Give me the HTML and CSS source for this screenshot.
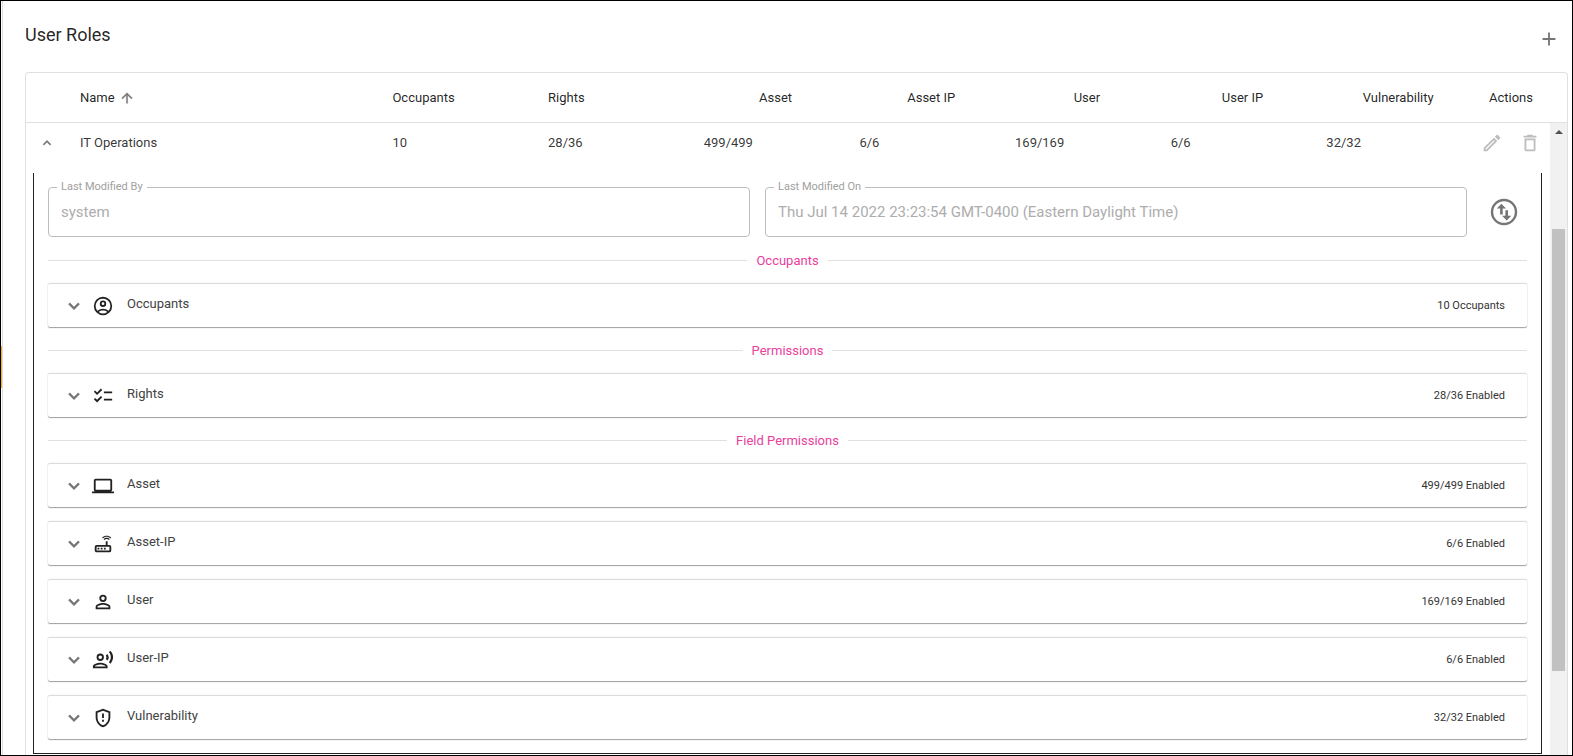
FILE: index.html
```html
<!DOCTYPE html>
<html lang="en">
<head>
<meta charset="utf-8">
<title>User Roles</title>
<link rel="stylesheet" href="styles.css">
</head>
<body>
<svg class="sprite" aria-hidden="true">
  <symbol id="chevron" viewBox="0 0 24 24"><path d="M7.41 8.59 12 13.17l4.59-4.58L18 10l-6 6-6-6z" stroke="currentColor" stroke-width=".5"/></symbol>
</svg>
<div class="drawer-edge"><span class="drawer-handle"></span></div>
<main class="page">
  <header class="page-header">
    <h1 class="page-title">User Roles</h1>
    <button class="icon-button add" aria-label="Add role"><svg class="icon" viewBox="0 0 24 24"><path d="M19 13h-6v6h-2v-6H5v-2h6V5h2v6h6z"/></svg></button>
  </header>
  <section class="grid-panel">
    <table class="roles">
      <colgroup><col class="col-toggle"><col class="col-name"><col><col><col><col><col><col><col><col class="col-actions"></colgroup>
      <thead>
        <tr>
          <th></th>
          <th><span class="sorted">Name <svg class="sort-icon" viewBox="0 0 24 24"><path d="m4 12 1.41 1.41L11 7.83V20h2V7.83l5.58 5.59L20 12l-8-8z" stroke="currentColor" stroke-width=".5"/></svg></span></th>
          <th>Occupants</th><th>Rights</th>
          <th class="centered">Asset</th><th class="centered">Asset IP</th><th class="centered">User</th><th class="centered">User IP</th><th class="centered">Vulnerability</th>
          <th class="actions-head">Actions</th>
        </tr>
      </thead>
      <tbody>
        <tr class="role-row">
          <td class="toggle-cell"><button class="icon-button" aria-label="Collapse"><svg class="icon-small flipped" viewBox="0 0 24 24"><use href="#chevron"/></svg></button></td>
          <td>IT Operations</td><td>10</td><td>28/36</td><td>499/499</td><td>6/6</td><td>169/169</td><td>6/6</td><td>32/32</td>
          <td class="actions-cell"><div class="actions">
            <button class="icon-button muted" aria-label="Edit"><svg class="icon" viewBox="0 0 24 24"><path d="m14.06 9.02.92.92L5.92 19H5v-.92zM17.66 3c-.25 0-.51.1-.7.29l-1.83 1.83 3.75 3.75 1.83-1.83a1 1 0 0 0 0-1.41l-2.34-2.34c-.2-.2-.45-.29-.71-.29m-3.6 3.19L3 17.25V21h3.75L17.81 9.94z"/></svg></button>
            <button class="icon-button muted" aria-label="Delete"><svg class="icon" viewBox="0 0 24 24"><path d="M6 19c0 1.100.9 2 2 2h8c1.100 0 2-.9 2-2V7H6zM8 9h8v10H8zm7.500-5-1-1h-5l-1 1H5v2h14V4z"/></svg></button>
          </div></td>
        </tr>
        <tr>
          <td class="detail-cell" colspan="10">
            <div class="detail">
              <div class="fields">
                <fieldset class="field"><legend><label for="by">Last Modified By</label></legend><input id="by" value="system" disabled></fieldset>
                <fieldset class="field"><legend><label for="on">Last Modified On</label></legend><input id="on" value="Thu Jul 14 2022 23:23:54 GMT-0400 (Eastern Daylight Time)" disabled></fieldset>
                <button class="icon-button swap" aria-label="Toggle all"><svg class="icon-large" viewBox="0 0 32 32"><circle cx="16" cy="16" r="12" fill="none" stroke="currentColor" stroke-width="2.4"/><path d="m13.400 7.800 4.600 4.600h-3.300v6h-2.600v-6H8.800zM18.700 24.400l-4.600-4.600h3.300v-5.600H20v5.600h3.300z"/></svg></button>
              </div>
              <h2 class="divider">Occupants</h2>
              <button class="card"><svg class="chevron" viewBox="0 0 24 24"><use href="#chevron"/></svg><svg class="card-icon" viewBox="0 0 24 24"><path fill-rule="evenodd" d="M12 2a10 10 0 1 0 0 20 10 10 0 0 0 0-20M7.350 18.500C8.660 17.560 10.260 17 12 17s3.340.56 4.650 1.500a8 8 0 0 1-9.300 0m10.790-1.380a9.950 9.950 0 0 0-12.280 0A8 8 0 1 1 20 12c0 1.950-.7 3.730-1.860 5.120M12 6a3.500 3.500 0 1 0 0 7 3.500 3.500 0 0 0 0-7m0 5a1.500 1.500 0 1 1 0-3 1.500 1.500 0 0 1 0 3"/></svg><span class="card-name">Occupants</span><span class="card-count">10 Occupants</span></button>
              <h2 class="divider">Permissions</h2>
              <button class="card"><svg class="chevron" viewBox="0 0 24 24"><use href="#chevron"/></svg><svg class="card-icon" viewBox="0 0 24 24"><path d="M22 7h-9v2h9zm0 8h-9v2h9zM5.540 11 2 7.460l1.410-1.410 2.120 2.120 4.240-4.240 1.410 1.410zm0 8L2 15.460l1.410-1.410 2.120 2.120 4.240-4.240 1.410 1.410z"/></svg><span class="card-name">Rights</span><span class="card-count">28/36 Enabled</span></button>
              <h2 class="divider">Field Permissions</h2>
              <div class="cards">
                <button class="card"><svg class="chevron" viewBox="0 0 24 24"><use href="#chevron"/></svg><svg class="card-icon" viewBox="0 0 24 24"><path fill-rule="evenodd" d="M20 18c1.100 0 1.990-.9 1.990-2L22 6a2 2 0 0 0-2-2H4a2 2 0 0 0-2 2v10a2 2 0 0 0 2 2H0v2h24v-2zM4 6h16v10H4z"/></svg><span class="card-name">Asset</span><span class="card-count">499/499 Enabled</span></button>
                <button class="card"><svg class="chevron" viewBox="0 0 24 24"><use href="#chevron"/></svg><svg class="card-icon" viewBox="0 0 24 24"><path fill-rule="evenodd" d="m20.200 5.900.8-.8C19.600 3.700 17.800 3 16 3s-3.600.7-5 2.100l.8.8C13 4.800 14.500 4.200 16 4.200s3 .6 4.200 1.700m-.9.800c-.9-.9-2.100-1.400-3.300-1.400s-2.400.5-3.300 1.400l.8.800c.7-.7 1.600-1 2.500-1s1.800.3 2.500 1zM19 13h-2V9h-2v4H5a2 2 0 0 0-2 2v4c0 1.100.9 2 2 2h14a2 2 0 0 0 2-2v-4a2 2 0 0 0-2-2m0 6H5v-4h14zM6 16h2v2H6zm3.500 0h2v2h-2zm3.500 0h2v2h-2z"/></svg><span class="card-name">Asset-IP</span><span class="card-count">6/6 Enabled</span></button>
                <button class="card"><svg class="chevron" viewBox="0 0 24 24"><use href="#chevron"/></svg><svg class="card-icon" viewBox="0 0 24 24"><path fill-rule="evenodd" d="M12 4a4 4 0 1 0 0 8 4 4 0 0 0 0-8m0 6a2 2 0 1 1 0-4 2 2 0 0 1 0 4m0 3c-2.670 0-8 1.340-8 4v3h16v-3c0-2.660-5.330-4-8-4m6 5H6v-.99c.2-.72 3.300-2.010 6-2.010s5.800 1.290 6 2z"/></svg><span class="card-name">User</span><span class="card-count">169/169 Enabled</span></button>
                <button class="card"><svg class="chevron" viewBox="0 0 24 24"><use href="#chevron"/></svg><svg class="card-icon" viewBox="0 0 24 24"><path fill-rule="evenodd" d="M9 13a4 4 0 1 0 0-8 4 4 0 0 0 0 8m0-6a2 2 0 1 1 0 4 2 2 0 0 1 0-4m0 8c-2.670 0-8 1.340-8 4v2h16v-2c0-2.660-5.330-4-8-4m-6 4c.22-.72 3.310-2 6-2 2.700 0 5.800 1.290 6 2zM15.080 7.050c.84 1.180.84 2.710 0 3.890l1.680 1.690c2.020-2.020 2.020-5.070 0-7.270zM20.070 2l-1.630 1.630c2.770 3.020 2.770 7.560 0 10.740L20.070 16c3.900-3.890 3.910-9.950 0-14"/></svg><span class="card-name">User-IP</span><span class="card-count">6/6 Enabled</span></button>
                <button class="card"><svg class="chevron" viewBox="0 0 24 24"><use href="#chevron"/></svg><svg class="card-icon" viewBox="0 0 24 24"><path fill-rule="evenodd" d="m12 2-8 3v6.090c0 5.050 3.410 9.760 8 10.910 4.590-1.150 8-5.860 8-10.910V5zm6 9.090c0 4-2.550 7.700-6 8.830-3.450-1.130-6-4.820-6-8.830v-4.700l6-2.250 6 2.250zM11 14h2v2h-2zm0-7h2v5h-2z"/></svg><span class="card-name">Vulnerability</span><span class="card-count">32/32 Enabled</span></button>
              </div>
            </div>
          </td>
        </tr>
      </tbody>
    </table>
    <div class="scroll">
      <div class="scroll-head"></div>
      <div class="scroll-track">
        <svg class="scroll-arrow" viewBox="0 0 8 4"><path d="M4 0 8 4H0z"/></svg>
        <div class="scroll-before"></div>
        <div class="scroll-thumb"></div>
        <div class="scroll-after"></div>
      </div>
    </div>
  </section>
</main>
</body>
</html>
```
FILE: styles.css
```css
* { box-sizing: border-box; }
html, body { height: 100%; }
body {
  display: flex;
  margin: 0;
  border: 1px solid #000;
  overflow: hidden;
  background: #fff;
  color: rgba(0, 0, 0, 0.87);
  font: 13px/20px Roboto, "Liberation Sans", sans-serif;
}
.sprite { position: absolute; width: 0; height: 0; }
svg { display: block; fill: currentColor; }
button { font: inherit; color: inherit; }

.drawer-edge {
  display: flex;
  align-items: center;
  flex: none;
  width: 2px;
  border-right: 1px solid #e4dcdc;
}
.drawer-handle { width: 1px; height: 42px; margin-bottom: 22px; background: #f5b301; }

.page { display: flex; flex-direction: column; flex: 1; min-width: 0; padding: 0 4px 0 22px; }
.page-header { display: flex; align-items: center; justify-content: space-between; flex: none; height: 71px; padding-right: 8px; }
.page-title { margin: 0 0 4px; font-size: 18px; line-height: 24px; font-weight: 400; }

.icon-button { display: flex; padding: 0; border: 0; background: none; color: #757575; }
.icon-button.muted { color: #bdbdbd; }
.icon-button.add { padding-top: 4px; }
.icon { width: 22px; height: 22px; }
.icon-small { width: 16px; height: 16px; }
.icon-large { width: 32px; height: 32px; }
.flipped { transform: rotate(180deg); }

.grid-panel {
  display: flex;
  flex: 1;
  min-height: 0;
  border: 1px solid #e0e0e0;
  border-bottom: 0;
  border-radius: 4px 4px 0 0;
}
.roles { flex: 1; min-width: 0; width: 100%; table-layout: fixed; border-collapse: separate; border-spacing: 0; align-self: flex-start; }
.col-toggle { width: 44px; }
.col-name { width: 20.5%; }
.col-actions { width: 78px; }
th { height: 50px; padding: 0 0 0 10px; border-bottom: 1px solid #e0e0e0; font-weight: 400; text-align: left; }
th.centered { padding-left: 8px; text-align: center; }
th.actions-head { padding: 0; text-align: center; }
.sorted { display: flex; align-items: center; gap: 4px; }
.sort-icon { width: 16px; height: 16px; color: #757575; }
.role-row td { height: 50px; padding: 0 0 10px 10px; color: rgba(0, 0, 0, 0.8); }
.role-row .toggle-cell { padding: 0 0 10px 13px; }
.role-row .actions-cell { padding: 0 9px 10px; }
.actions { display: flex; justify-content: space-between; }

.detail-cell { padding: 0 8px 0 7px; }
.detail { padding: 8px 14px 14px; border: 1px solid #212121; border-top: 0; }
.fields { display: flex; align-items: flex-end; gap: 15px; }
.field { flex: 1; min-width: 0; height: 56px; margin: 0; padding: 0 12px; border: 1px solid #bdbdbd; border-radius: 4px; color: #a0a0a0; }
.field legend { margin-left: -4px; padding: 0 4px; font-size: 11px; line-height: 12px; }
.field input { display: block; width: 100%; height: 38px; padding: 0; border: 0; background: none; color: #adadad; font: 15px/20px Roboto, "Liberation Sans", sans-serif; }
.swap { width: 45px; padding: 0 5px 9px 6px; }

.divider { display: flex; align-items: center; gap: 9px; margin: 13px 0 12px; font-size: 13px; line-height: 21px; font-weight: 400; color: #e83e9c; }
.divider::before, .divider::after { content: ""; flex: 1; height: 1px; background: #e0e0e0; }

.cards { display: flex; flex-direction: column; gap: 14px; }
.card {
  display: flex;
  align-items: center;
  width: 100%;
  height: 44px;
  padding: 0 22px 0 15px;
  border: 0;
  border-top: 1px solid #dcdcdc;
  border-radius: 2px;
  background: #fff;
  box-shadow: 0 1px 1px rgba(0, 0, 0, 0.36), 0 0 2px rgba(0, 0, 0, 0.1);
  text-align: left;
}
.chevron { width: 22px; height: 22px; margin-right: 7px; color: #757575; }
.card-icon { width: 22px; height: 22px; margin-right: 13px; }
.card-name { flex: 1; margin-bottom: 4px; color: #424242; }
.card-count { font-size: 11px; color: #333; }

.scroll { display: flex; flex-direction: column; flex: none; width: 17px; }
.scroll-head { height: 50px; border-bottom: 1px solid #e0e0e0; }
.scroll-track { display: flex; flex-direction: column; align-items: center; flex: 1; padding-top: 7px; background: #f1f1f1; }
.scroll-arrow { flex: none; width: 8px; height: 4px; color: #505050; }
.scroll-before { flex: 95; }
.scroll-thumb { flex: 442; width: 13px; background: #c1c1c1; }
.scroll-after { flex: 84; }
```
